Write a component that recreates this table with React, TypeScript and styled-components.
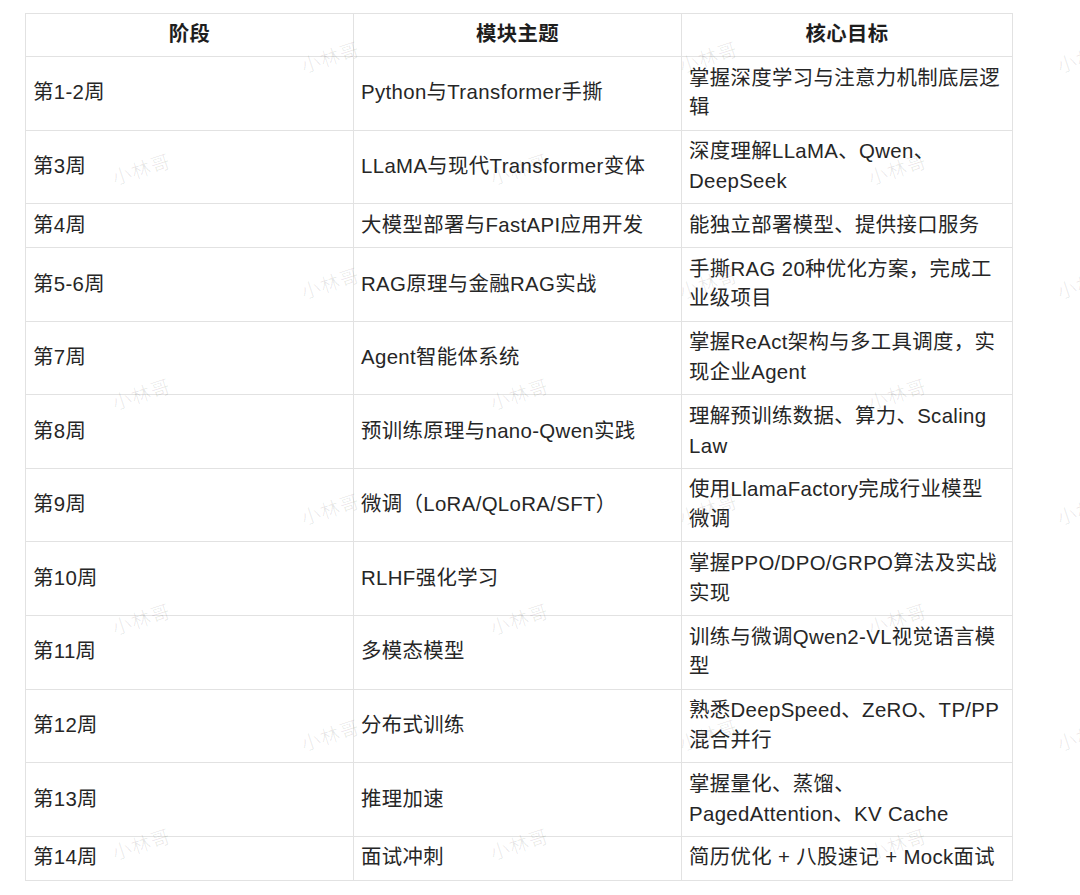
import styled, { createGlobalStyle } from "styled-components";

const GlobalStyle = createGlobalStyle`
  html, body {
    margin: 0;
    padding: 0;
    background: #ffffff;
  }
  body {
    font-family: "Liberation Sans", "Noto Sans CJK SC", sans-serif;
    color: #222222;
  }
`;

const Page = styled.div`
  position: relative;
  width: 1080px;
  height: 895px;
  overflow: hidden;
  background: #ffffff;
  padding: 13px 0 0 25px;
  box-sizing: border-box;
`;

const Table = styled.table`
  width: 987px;
  table-layout: fixed;
  border-collapse: collapse;
  border: 1px solid #d8d8d8;
  font-size: 20.4px;
  letter-spacing: 0.35px;
  line-height: 29.7px;
`;

const HeadCell = styled.th`
  border: 1px solid #e2e2e2;
  padding: 6.15px 7px;
  font-weight: 700;
  text-align: center;
  color: #1e1e1e;
`;

const Cell = styled.td<{ $wide?: boolean }>`
  border: 1px solid #e2e2e2;
  padding: 6.6px ${(p) => (p.$wide ? "10px" : "7px")} 6.6px 7px;
  text-align: left;
  vertical-align: middle;
  color: #262626;
`;

const MarkLayer = styled.div`
  position: absolute;
  inset: 0;
  pointer-events: none;
  overflow: hidden;
`;

const Mark = styled.span`
  position: absolute;
  transform: translate(-50%, -50%) rotate(-18deg);
  font-family: "Noto Sans CJK SC", sans-serif;
  font-size: 19px;
  font-weight: 300;
  color: rgba(0, 0, 0, 0.11);
  white-space: nowrap;
  letter-spacing: 1px;
`;

const rows: [string, string, string][] = [
  ["第1-2周", "Python与Transformer手撕", "掌握深度学习与注意力机制底层逻辑"],
  ["第3周", "LLaMA与现代Transformer变体", "深度理解LLaMA、Qwen、DeepSeek"],
  ["第4周", "大模型部署与FastAPI应用开发", "能独立部署模型、提供接口服务"],
  ["第5-6周", "RAG原理与金融RAG实战", "手撕RAG 20种优化方案，完成工业级项目"],
  ["第7周", "Agent智能体系统", "掌握ReAct架构与多工具调度，实现企业Agent"],
  ["第8周", "预训练原理与nano-Qwen实践", "理解预训练数据、算力、Scaling Law"],
  ["第9周", "微调（LoRA/QLoRA/SFT）", "使用LlamaFactory完成行业模型微调"],
  ["第10周", "RLHF强化学习", "掌握PPO/DPO/GRPO算法及实战实现"],
  ["第11周", "多模态模型", "训练与微调Qwen2-VL视觉语言模型"],
  ["第12周", "分布式训练", "熟悉DeepSpeed、ZeRO、TP/PP混合并行"],
  ["第13周", "推理加速", "掌握量化、蒸馏、PagedAttention、KV Cache"],
  ["第14周", "面试冲刺", "简历优化 + 八股速记 + Mock面试"],
];

// watermark grid: two staggered rows per tile
const marks: { x: number; y: number }[] = [];
for (let j = 0; j < 5; j++) {
  for (let k = 0; k < 4; k++) {
    marks.push({ x: 330 + k * 378, y: 56 + j * 226 });
    marks.push({ x: 141 + k * 378, y: 168 + j * 225 });
  }
}

function App() {
  return (
    <>
      <GlobalStyle />
      <Page>
        <Table>
          <colgroup>
            <col style={{ width: 328 }} />
            <col style={{ width: 328 }} />
            <col style={{ width: 331 }} />
          </colgroup>
          <thead>
            <tr>
              <HeadCell>阶段</HeadCell>
              <HeadCell>模块主题</HeadCell>
              <HeadCell>核心目标</HeadCell>
            </tr>
          </thead>
          <tbody>
            {rows.map(([stage, topic, goal]) => (
              <tr key={stage}>
                <Cell>{stage}</Cell>
                <Cell>{topic}</Cell>
                <Cell $wide>{goal}</Cell>
              </tr>
            ))}
          </tbody>
        </Table>
        <MarkLayer>
          {marks.map((m, i) => (
            <Mark key={i} style={{ left: m.x, top: m.y }}>
              小林哥
            </Mark>
          ))}
        </MarkLayer>
      </Page>
    </>
  );
}

export default App;
